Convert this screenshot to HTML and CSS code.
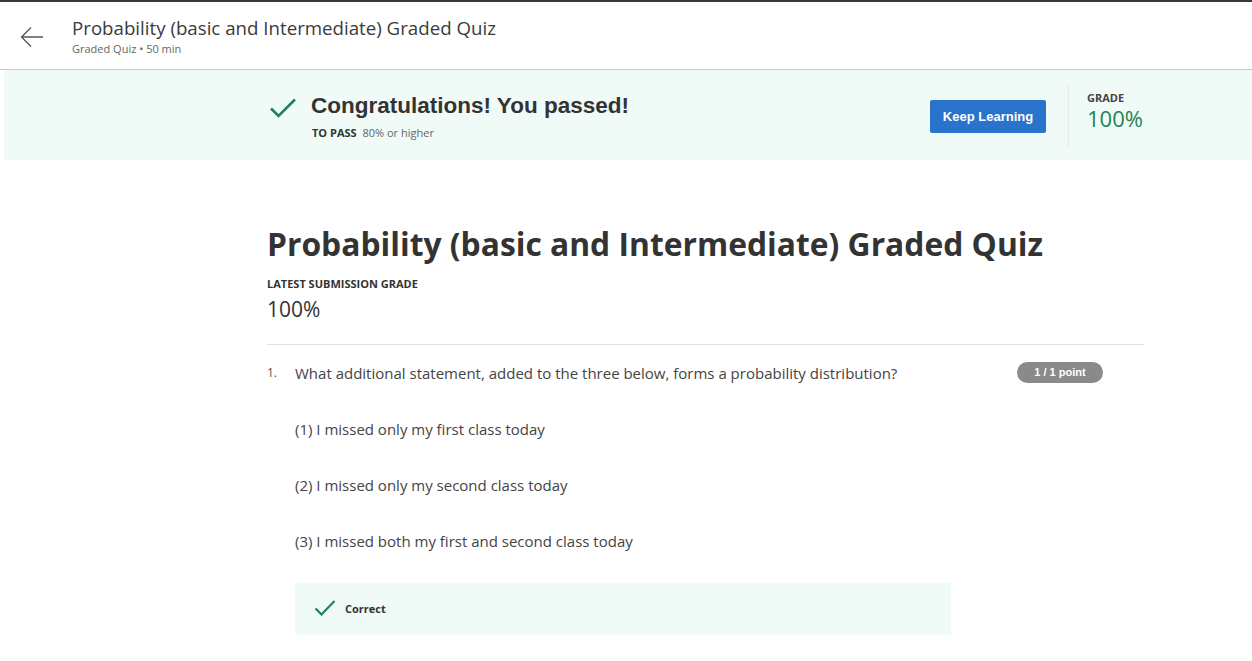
FILE: index.html
```html
<!DOCTYPE html>
<html>
<head>
<meta charset="utf-8">
<link rel="stylesheet" href="styles.css">
</head>
<body>
<div class="topline"></div>
<header class="header">
  <svg class="back" width="24" height="22" viewBox="0 0 24 22"><path d="M23 11H2M11 1.5L1.5 11L11 20.5" fill="none" stroke="#555" stroke-width="1.3"/></svg>
  <div class="htext">
    <div class="htitle">Probability (basic and Intermediate) Graded Quiz</div>
    <div class="hsub">Graded Quiz • 50 min</div>
  </div>
</header>
<section class="banner">
  <div class="col banner-inner">
    <div class="pass">
      <svg class="check" width="28" height="22" viewBox="0 0 28 22"><path d="M2 11.5L9.5 19L26 2.5" fill="none" stroke="#1f8354" stroke-width="2.6"/></svg>
      <div>
        <div class="congrats">Congratulations! You passed!</div>
        <div class="topass"><b>TO PASS</b> 80% or higher</div>
      </div>
    </div>
    <button class="keep">Keep Learning</button>
    <div class="divider"></div>
    <div class="grade">
      <div class="glabel">GRADE</div>
      <div class="gval">100%</div>
    </div>
  </div>
</section>
<main class="col main">
  <h1 class="title">Probability (basic and Intermediate) Graded Quiz</h1>
  <div class="lsg">LATEST SUBMISSION GRADE</div>
  <div class="lsgval">100%</div>
  <hr class="rule">
  <div class="q">
    <div class="qhead">
      <span class="qnum">1.</span>
      <span class="qtext">What additional statement, added to the three below, forms a probability distribution?</span>
      <span class="badge">1 / 1 point</span>
    </div>
    <div class="opts">
      <p>(1) I missed only my first class today</p>
      <p>(2) I missed only my second class today</p>
      <p>(3) I missed both my first and second class today</p>
    </div>
    <div class="correct">
      <svg width="22" height="18" viewBox="0 0 22 18"><path d="M1.5 9.5L7.5 15.5L20.5 2" fill="none" stroke="#1f8354" stroke-width="2.2"/></svg>
      <span>Correct</span>
    </div>
  </div>
</main>
</body>
</html>
```
FILE: styles.css
```css
* { box-sizing: border-box; }
body { margin: 0; font-family: "Open Sans", sans-serif; color: #333; background: #fff; }
.topline { height: 2px; background: #3a3a3a; }
.header { height: 68px; border-bottom: 1px solid #c8c8c8; display: flex; align-items: flex-start; }
.back { margin: 24px 0 0 20px; }
.htext { margin: 14px 0 0 28px; }
.htitle { font-size: 18.7px; line-height: 24px; color: #3b3b3b; }
.hsub { font-size: 11px; line-height: 16px; color: #666; margin-top: 1px; }
.banner { margin-left: 4px; height: 90px; background: #f0faf7; }
.col { margin-left: 267px; width: 877px; }
.banner-inner { margin-left: 263px; height: 90px; display: flex; align-items: center; }
.pass { display: flex; align-items: flex-start; flex: 1; padding-top: 0; }
.check { margin: 6px 14px 0 2px; }
.congrats { font-family: "Liberation Sans", Arial, sans-serif; font-weight: bold; font-size: 22.5px; line-height: 26px; color: #333; margin-top: 2px; }
.topass { font-size: 11px; color: #666; margin-top: 6px; margin-left: 1px; }
.topass b { color: #333; margin-right: 3px; }
.keep { font-family: "Liberation Sans", Arial, sans-serif; font-weight: bold; font-size: 13px; color: #fff; background: #2a73cc; border: 0; border-radius: 2px; width: 116px; height: 33px; padding: 0; margin-top: 3px; }
.divider { width: 1px; height: 64px; background: #e2ebe8; margin: 0 18px 0 22px; }
.grade { width: 57px; margin-top: -8px; }
.glabel { font-size: 11px; font-weight: bold; color: #444; line-height: 14px; }
.gval { font-size: 22px; color: #1f8354; line-height: 26px; white-space: nowrap; }
.main { padding-top: 64px; }
.title { margin: 0; font-size: 31.8px; font-weight: bold; line-height: 40px; color: #333; }
.lsg { font-size: 11px; font-weight: bold; margin-top: 12px; line-height: 15px; color: #333; }
.lsgval { font-size: 21px; line-height: 28px; margin-top: 4px; color: #333; }
.rule { border: 0; border-top: 1px solid #e2e2e2; margin: 21px 0 0 0; }
.q { padding-top: 17px; }
.qhead { display: flex; align-items: center; }
.qnum { width: 28px; font-size: 12px; color: #555; }
.qtext { font-size: 15px; color: #444; flex: 1; }
.badge { font-family: "Liberation Sans", Arial, sans-serif; font-weight: bold; font-size: 11px; color: #fff; background: #8a8a8a; border-radius: 11px; width: 86px; height: 21px; line-height: 21px; text-align: center; margin-right: 41px; }
.opts { margin-left: 28px; }
.opts p { margin: 0; font-size: 15px; color: #444; line-height: 20px; margin-top: 36px; }
.correct { margin: 32px 0 0 28px; width: 656px; height: 52px; background: #f0faf7; display: flex; align-items: center; padding-left: 19px; }
.correct svg { margin-right: 9px; margin-top: -2px; }
.correct span { font-size: 11px; font-weight: bold; color: #333; margin-top: -2px; }
```
